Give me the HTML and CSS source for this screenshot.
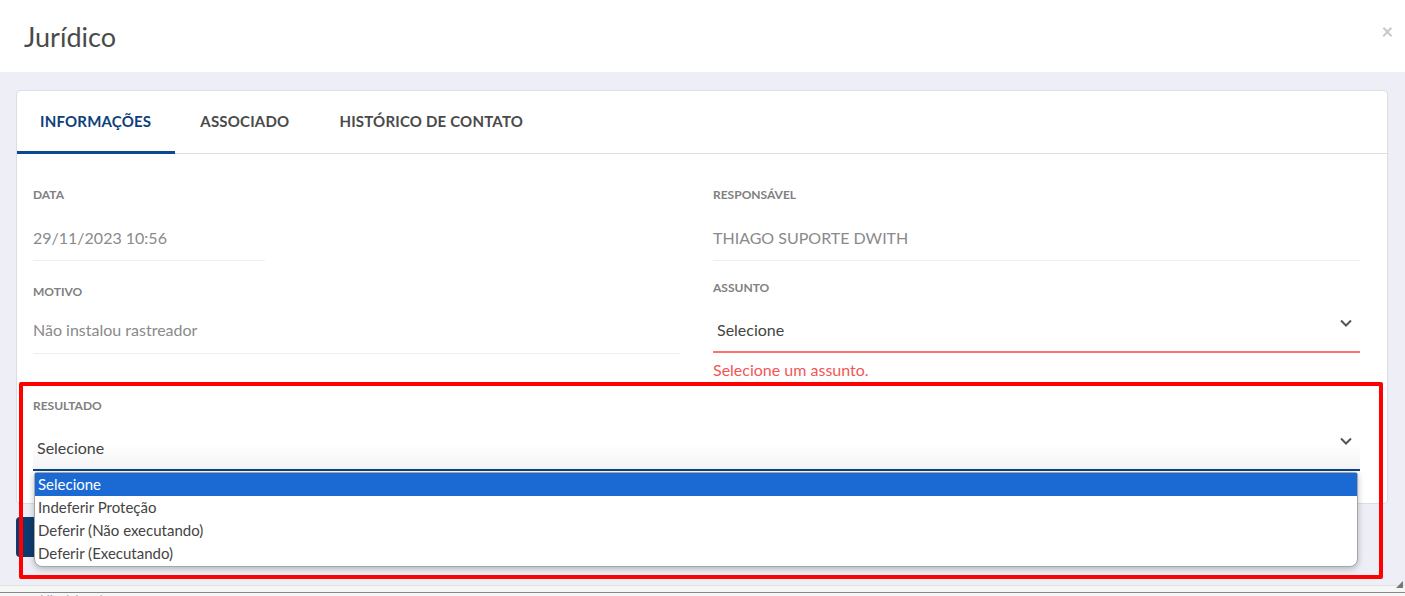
FILE: index.html
```html
<!DOCTYPE html>
<html lang="pt-br">
<head>
    <meta charset="UTF-8">
    <meta name="viewport" content="width=device-width, initial-scale=1.0">
    <title>Jurídico</title>
    <link rel="stylesheet" href="styles.css">
</head>
<body>
    <div class="modal">
        <div class="modal-header">
            <h1>Jurídico</h1>
            <span class="close">&times;</span>
        </div>
        <div class="modal-body">
            <div class="card">
                <div class="tabs">
                    <div class="tab active">INFORMAÇÕES</div>
                    <div class="tab">ASSOCIADO</div>
                    <div class="tab">HISTÓRICO DE CONTATO</div>
                </div>
                <div class="card-body">
                    <div class="field field-data">
                        <label>DATA</label>
                        <div class="value narrow">29/11/2023 10:56</div>
                    </div>
                    <div class="field field-data">
                        <label>RESPONSÁVEL</label>
                        <div class="value">THIAGO SUPORTE DWITH</div>
                    </div>
                    <div class="field">
                        <label>MOTIVO</label>
                        <div class="value">Não instalou rastreador</div>
                    </div>
                    <div class="field field-select">
                        <label>ASSUNTO</label>
                        <div class="select invalid">
                            <span>Selecione</span>
                            <svg class="chevron" viewBox="0 0 12 8" width="12" height="8"><path d="M1 1.5 6 6.5 11 1.5" fill="none" stroke="#555" stroke-width="2"/></svg>
                        </div>
                        <div class="error">Selecione um assunto.</div>
                    </div>
                    <div class="field field-select full">
                        <label>RESULTADO</label>
                        <div class="select focused">
                            <span>Selecione</span>
                            <svg class="chevron" viewBox="0 0 12 8" width="12" height="8"><path d="M1 1.5 6 6.5 11 1.5" fill="none" stroke="#555" stroke-width="2"/></svg>
                        </div>
                        <ul class="options">
                            <li class="selected">Selecione</li>
                            <li>Indeferir Proteção</li>
                            <li>Deferir (Não executando)</li>
                            <li>Deferir (Executando)</li>
                        </ul>
                    </div>
                </div>
            </div>
            <div class="actions">
                <button type="button" class="btn">CONFIRMAR</button>
            </div>
        </div>
        <div class="modal-footer">
            <span>Histórico de contato</span>
        </div>
        <span class="grip"></span>
    </div>
    <div class="highlight"></div>
</body>
</html>
```

FILE: styles.css
```css
*{
    box-sizing: border-box;
}
body{
    margin: 0;
    font-family: "Lato", "Open Sans", sans-serif;
    background-color: #fff;
    overflow: hidden;
}
.modal{
    width: 1405px;
    height: 596px;
    position: relative;
    display: flex;
    flex-direction: column;
}
.modal-header{
    height: 72px;
    display: flex;
    align-items: center;
    justify-content: space-between;
    padding: 0 12px 0 24px;
    background-color: #fff;
}
.modal-header h1{
    margin: 0;
    font-size: 27px;
    font-weight: 400;
    color: #4a4a4a;
}
.close{
    color: #c9c9c9;
    font-size: 20px;
    font-weight: 700;
    margin-bottom: 10px;
}
.modal-body{
    flex: 1;
    background-color: #eeeef7;
    padding: 18px 17px 0 16px;
}
.card{
    background-color: #fff;
    border: solid 1px #dcdce2;
    border-radius: 4px;
    height: 414px;
}
.tabs{
    display: flex;
    height: 63px;
    border-bottom: solid 1px #dedede;
}
.tab{
    padding: 0 24px 4px;
    display: flex;
    align-items: center;
    font-size: 15px;
    font-weight: 700;
    letter-spacing: 0.2px;
    color: #4a4a4a;
    margin-bottom: -1px;
}
.tab.active{
    color: #0e3f7c;
    border-bottom: solid 3px #0b4a8f;
    padding: 0 24px 1px 23px;
}
.tab + .tab{
    padding: 0 25px 4px;
}
.card-body{
    display: grid;
    grid-template-columns: 1fr 1fr;
    column-gap: 33px;
    padding: 0 27px 0 16px;
}
.field label{
    display: block;
    font-size: 12px;
    font-weight: 700;
    color: #808080;
    line-height: 16px;
}
.field{
    padding-top: 23px;
}
.field.field-data{
    padding-top: 33px;
}
.field.field-select{
    padding-top: 19px;
}
.field.full{
    grid-column: 1 / 3;
    position: relative;
    padding-top: 18px;
}
.value{
    font-size: 16px;
    line-height: 20px;
    color: #8a8a8a;
    border-bottom: solid 1px #efefef;
    padding: 20px 0 13px;
}
.field-data .value{
    padding: 25px 0 12px;
}
.value.narrow{
    width: 232px;
}
.select{
    display: flex;
    align-items: center;
    justify-content: space-between;
    padding: 0 8px 0 4px;
    height: 57px;
    font-size: 16px;
    color: #444;
}
.select span{
    padding-top: 12px;
}
.chevron{
    margin-bottom: 2px;
}
.select.invalid{
    border-bottom: solid 2px #ff6f6f;
}
.error{
    font-size: 16px;
    color: #f25656;
    line-height: 20px;
    padding-top: 7px;
}
.select.focused{
    border-bottom: solid 2px #0d4584;
    background: linear-gradient(to bottom, #fff 55%, #f4f4f6);
}
/* lista aberta do select */
.options{
    position: absolute;
    top: 92px;
    left: 1px;
    right: 2px;
    margin: 0;
    padding: 0 0 1px;
    list-style: none;
    background-color: #fff;
    border: solid 1px #a5a5a5;
    border-radius: 3px 3px 8px 8px;
    box-shadow: 0 2px 6px rgba(0, 0, 0, 0.25);
    z-index: 2;
}
.options li{
    height: 23px;
    line-height: 23px;
    padding-left: 3px;
    font-size: 15px;
    color: #444;
}
.options li.selected{
    background-color: #1b69d3;
    color: #fff;
}
.actions{
    padding-top: 13px;
}
.btn{
    height: 40px;
    padding: 0 22px;
    border: none;
    border-radius: 4px;
    background-color: #0d3b6f;
    color: #fff;
    font-family: inherit;
    font-size: 15px;
    font-weight: 700;
}
.modal-footer{
    height: 11px;
    background-color: #f6f6f6;
    border-top: solid 1px #e2e2e2;
    position: relative;
    overflow: hidden;
}
.modal-footer::after{
    content: "";
    position: absolute;
    left: 0;
    right: 0;
    top: 6px;
    border-top: solid 1px #888;
}
.modal-footer span{
    position: absolute;
    left: 40px;
    top: 6px;
    font-size: 13px;
    color: #aaa;
}
.grip{
    position: absolute;
    right: 2px;
    bottom: 8px;
    width: 0;
    height: 0;
    border-left: solid 7px transparent;
    border-bottom: solid 7px #777;
}
.highlight{
    position: absolute;
    left: 19px;
    top: 382px;
    width: 1364px;
    height: 197px;
    border: solid 4px #ff0000;
    border-radius: 2px;
    z-index: 3;
}
```
